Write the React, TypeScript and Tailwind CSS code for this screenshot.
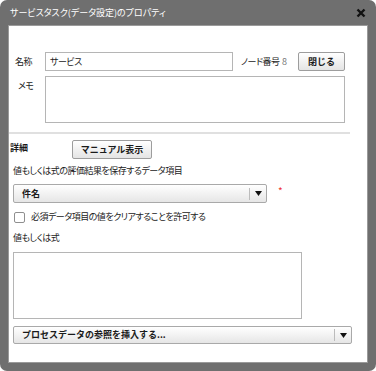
const jp = "font-['Noto_Sans_CJK_JP','Noto_Sans',sans-serif]";
const palt = "[font-feature-settings:'palt']";
const bold = "text-[9px] font-bold tracking-normal [font-feature-settings:normal] text-[#1a1a1a]";

function Arrow() {
  return (
    <svg width="7" height="5" viewBox="0 0 7 5" className="block">
      <path d="M0 0H7L3.5 5Z" fill="#111" />
    </svg>
  );
}

function SelectBox({ label, size }: { label: string; size: string }) {
  return (
    <div
      className={`flex items-center rounded-[2px] border border-[#a9a9a9] bg-gradient-to-b from-white to-[#e6e6e6] ${size}`}
    >
      <span className={`flex-1 pl-[8px] ${bold}`}>{label}</span>
      <span className="h-[12px] w-px bg-[#bcbcbc]" />
      <span className="flex w-[16px] justify-center">
        <Arrow />
      </span>
    </div>
  );
}

export default function App() {
  return (
    <div className={`h-[371px] w-[376px] bg-white ${jp} ${palt}`}>
      <div className="flex h-[371px] w-[376px] flex-col rounded-[7px] bg-[#6f6f6f] px-[8px] pb-[8px]">
        <div className="flex h-[25px] items-center justify-between px-[2px]">
          <span className="text-[9px] text-white">サービスタスク(データ設定)のプロパティ</span>
          <svg width="10" height="10" viewBox="0 0 10 10">
            <path d="M1.5 1.5L8.5 8.5M8.5 1.5L1.5 8.5" stroke="#111" strokeWidth="2.4" />
          </svg>
        </div>

        <div className="flex-1 border border-[#9a9a9a] bg-white text-[9px] leading-[14px] tracking-[-0.5px] text-[#222]">
          <div className="mt-[26px] flex h-[19px] items-center">
            <span className="ml-[6px] w-[30px]">名称</span>
            <div className="flex h-[19px] w-[188px] items-center border border-[#b5b5b5] pl-[4px]">
              サービス
            </div>
            <span className="ml-[8px] w-[57px]">
              ノード番号 <span className="ml-[1px] text-[#777]">8</span>
            </span>
            <button className={`h-[19px] w-[47px] rounded-[2px] border border-[#9d9d9d] bg-gradient-to-b from-white to-[#e4e4e4] ${bold}`}>
              閉じる
            </button>
          </div>

          <div className="mt-[5px] flex">
            <span className="ml-[9px] mt-[3px] w-[27px]">メモ</span>
            <div className="h-[47px] w-[300px] border border-[#b5b5b5]" />
          </div>

          <div className="mt-[9px] h-[2px] w-[341px] bg-[#e0e0e0]" />

          <div className="mt-[6px] flex items-start">
            <span className={`ml-[1px] mt-[1px] w-[62px] ${bold}`}>詳細</span>
            <button className={`h-[19px] w-[80px] rounded-[2px] border border-[#9d9d9d] bg-gradient-to-b from-white to-[#e4e4e4] ${bold}`}>
              マニュアル表示
            </button>
          </div>

          <div className="ml-[4px] mt-[5px]">値もしくは式の評価結果を保存するデータ項目</div>

          <div className="ml-[4px] mt-[6px] flex items-center">
            <SelectBox label="件名" size="h-[19px] w-[254px]" />
            <span className="-mt-[6px] ml-[11px] text-[10px] text-[#e33]">*</span>
          </div>

          <div className="ml-[5px] mt-[7px] flex items-center">
            <span className="h-[11px] w-[11px] rounded-[2px] border border-[#8f8f8f] bg-white" />
            <span className="ml-[6px]">必須データ項目の値をクリアすることを許可する</span>
          </div>

          <div className="ml-[4px] mt-[7px]">値もしくは式</div>

          <div className="ml-[4px] mt-[7px] h-[67px] w-[289px] border border-[#b5b5b5]" />

          <div className="ml-[4px] mt-[7px]">
            <SelectBox label="プロセスデータの参照を挿入する..." size="h-[18px] w-[339px]" />
          </div>
        </div>
      </div>
    </div>
  );
}
